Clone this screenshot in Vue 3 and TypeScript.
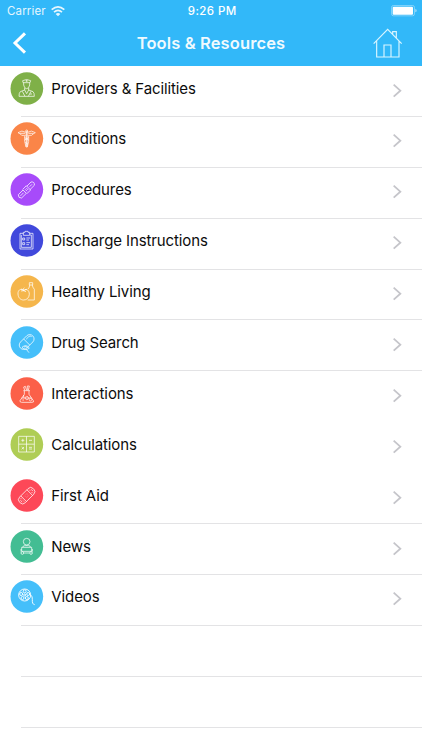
<script setup lang="ts">
interface Item {
  label: string
  color: string
  icon: string
  noLine?: boolean
}

const items: Item[] = [
  { label: 'Providers & Facilities', color: '#7fb048', icon: 'doctor' },
  { label: 'Conditions', color: '#fa8548', icon: 'caduceus' },
  { label: 'Procedures', color: '#a74bfa', icon: 'scalpel' },
  { label: 'Discharge Instructions', color: '#4149dc', icon: 'clipboard' },
  { label: 'Healthy Living', color: '#f5b64c', icon: 'food' },
  { label: 'Drug Search', color: '#45bffa', icon: 'pill' },
  { label: 'Interactions', color: '#fb6049', icon: 'flask', noLine: true },
  { label: 'Calculations', color: '#afcd55', icon: 'calculator', noLine: true },
  { label: 'First Aid', color: '#fd4858', icon: 'bandage' },
  { label: 'News', color: '#43bd93', icon: 'news' },
  { label: 'Videos', color: '#45bffa', icon: 'reel' },
]
</script>

<template>
  <div class="screen">
    <header class="top">
      <div class="status">
        <div class="carrier">
          <span>Carrier</span>
          <svg class="wifi" viewBox="0 0 42 32" width="14" height="10.7">
            <path d="M2 11Q21-6 40 11" />
            <path d="M9 18.500Q21 8 33 18.500" />
            <path class="dot" d="M14 24Q21 18 28 24L21 31Z" />
          </svg>
        </div>
        <span class="time">9:26 PM</span>
        <svg class="battery" viewBox="0 0 78 34" width="26" height="11.33">
          <rect class="shell" x="1.500" y="1.500" width="69" height="31" rx="6" />
          <rect class="charge" x="5" y="5" width="61" height="24" rx="3" />
          <path class="tip" d="M73 12Q77 13 77 17T73 22Z" />
        </svg>
      </div>
      <nav class="bar">
        <svg class="back" viewBox="0 0 40 66" width="13.3" height="22">
          <path d="M36 4L6 33L36 62" />
        </svg>
        <h1>Tools &amp; Resources</h1>
        <svg class="home" viewBox="0 0 88 90" width="29.33" height="30">
          <path d="M2 47L44 4L86 47M11 40V87H78V40M33 87V51H54V87M59 18V11H70V30" />
        </svg>
      </nav>
    </header>

    <ul class="list">
      <li v-for="item in items" :key="item.label" class="row" :class="{ plain: item.noLine }">
        <svg class="disc" viewBox="0 0 99 99" width="33" height="33">
          <circle class="fill" cx="50.500" cy="49.500" r="49" :fill="item.color" />
          <g v-if="item.icon === 'doctor'">
            <path d="M39 32L38 26Q50 19 62 26L60 32ZM41 32V39Q43 50 50 50T59 39V32M50 24V29M47 27H53" />
            <path d="M44 48V54L31 59Q27 62 27 73H73Q73 62 69 59L56 54V48M44 54L50 65L56 54M37 58L45 73M63 58L55 73M59 66H66" />
          </g>
          <g v-else-if="item.icon === 'caduceus'">
            <path d="M47 31Q36 23 24 32L31 36L35 40L47 40M53 31Q64 23 76 32L69 36L65 40L53 40M30 34H45M55 34H70" />
            <path class="thick" d="M50 28V74" />
            <path d="M44 42V58L48 75H52L56 58V42M44 47L56 54M56 47L44 54M46 61L54 67" />
            <circle cx="50" cy="27" r="3" />
          </g>
          <g v-else-if="item.icon === 'scalpel'" transform="rotate(-45 49 51)">
            <path d="M22 44H42V58H22Q14 51 22 44ZM42 42H58V60H42M58 44H76Q85 51 76 58H58M48 47V55M53 47V55M24 51H37M63 51H73" />
          </g>
          <g v-else-if="item.icon === 'clipboard'">
            <path d="M40 28H30V75H69V28H59M34 33V70H64V33H60M40 25H45V22H54V25H59V34H40Z" />
            <path d="M38 42H44V48H38ZM38 56H44V62H38ZM49 42H60M49 48H57M49 56H60M49 62H57" />
          </g>
          <g v-else-if="item.icon === 'food'">
            <path d="M41 47C31 38 23 47 24 57C25 69 32 75 41 75S57 69 58 58C58 47 51 39 41 47ZM33 42Q40 43 41 48Q43 42 51 43M40 47Q39 40 43 38M33 48L41 47L48 50" />
            <path d="M58 23H68V30H58ZM59 30Q59 37 54 42M67 30Q67 36 73 43V75H53" />
          </g>
          <g v-else-if="item.icon === 'pill'">
            <g transform="rotate(-45 50 48)">
              <rect x="24" y="35" width="52" height="26" rx="13" />
              <path d="M50 35V61M55 41H66Q71 41 72 47" />
            </g>
            <path d="M36 64Q48 53 58 66Q48 76 36 64ZM42 63Q48 59 53 65M49 70L57 80" />
          </g>
          <g v-else-if="item.icon === 'flask'">
            <path d="M40 41H60M43 41V52L30 71Q29 76 35 76H66Q73 76 70 71L57 52V41M44 40L41 30L46 28L50 40M52 40V27H58L55 40M35 63H65" />
            <path d="M41 54V62M50 58A5 5 0 1 0 51 58M61 64A4 4 0 1 0 62 64M37 69H42" />
          </g>
          <g v-else-if="item.icon === 'calculator'">
            <path d="M26 25H73V72H26ZM49.500 25V72M26 48.500H73M34 37H43M38.500 32.500V41.500M57 37H66M35 57L42 64M42 57L35 64M57 58H66M57 63H66" />
          </g>
          <g v-else-if="item.icon === 'bandage'" transform="rotate(-45 50 50)">
            <rect x="21" y="38" width="58" height="24" rx="11" />
            <path d="M37 38V62M63 38V62M27 46V54M32 43V47M32 53V57M68 43V47M68 53V57M73 46V54" />
            <path d="M44 46H45M50 46H51M56 46H57M44 54H45M50 54H51M56 54H57M47 50H48M53 50H54" />
          </g>
          <g v-else-if="item.icon === 'news'">
            <circle cx="50" cy="35" r="10" />
            <path d="M38 52Q39 47 44 47H56Q61 47 62 52M35 52H65V64H35ZM42 69H58M33 57V65M67 57V65" />
            <circle cx="37" cy="69" r="4" />
            <circle cx="63" cy="69" r="4" />
          </g>
          <g v-else class="strong">
            <circle cx="44" cy="45" r="18" />
            <circle cx="44" cy="45" r="3" />
            <circle cx="44" cy="34" r="4.500" />
            <circle cx="54.500" cy="42" r="4.500" />
            <circle cx="50.500" cy="54" r="4.500" />
            <circle cx="37.500" cy="54" r="4.500" />
            <circle cx="33.500" cy="42" r="4.500" />
            <path d="M62 45Q68 49 67 59Q66 73 74 74" />
          </g>
        </svg>
        <span class="label">{{ item.label }}</span>
        <svg class="chevron" viewBox="0 0 26 42" width="8.67" height="14">
          <path d="M2 2L22 20L2 38" />
        </svg>
      </li>
      <li v-for="n in 2" :key="n" class="row" />
    </ul>
  </div>
</template>

<style>
body {
  background: #fff;
  overflow: hidden;
}
</style>

<style scoped>
.screen {
  width: 422px;
  height: 750px;
  overflow: hidden;
  background: #fff;
  font-family: Inter, "Liberation Sans", sans-serif;
}
.top {
  height: 66px;
  background: #32b8f9;
  color: #fff;
}
svg {
  display: block;
  flex: none;
  overflow: visible;
  fill: none;
}
.status {
  display: grid;
  grid-template-columns: 1fr auto 1fr;
  align-items: center;
  height: 22px;
  padding: 0 5.500px 0 7px;
  box-sizing: border-box;
}
.carrier {
  display: flex;
  align-items: center;
  gap: 5px;
  font-size: 11.5px;
  letter-spacing: 0.15px;
  opacity: 0.88;
}
.wifi path {
  stroke: #fff;
  stroke-width: 5;
}
.wifi .dot {
  fill: #fff;
  stroke: none;
}
.time {
  margin-left: 1px;
  font-size: 11.5px;
  font-weight: 500;
  letter-spacing: 0.4px;
}
.battery {
  justify-self: end;
}
.shell {
  stroke: #a5e0fc;
  stroke-width: 2;
}
.charge {
  fill: #fff;
}
.tip {
  fill: #a5e0fc;
}
.bar {
  display: grid;
  grid-template-columns: 1fr auto 1fr;
  align-items: center;
  height: 42px;
  padding: 0 20px 0 13px;
}
.back path {
  stroke: #fff;
  stroke-width: 9;
}
h1 {
  margin: 0 0 0 7px;
  font-size: 16.5px;
  font-weight: 600;
  line-height: 20px;
  letter-spacing: 0.12px;
  opacity: 0.93;
}
.home {
  justify-self: end;
}
.home path {
  stroke: #d9f5ff;
  stroke-width: 3.5;
}
.list {
  margin: 0;
  padding: 0;
  list-style: none;
}
.row {
  display: flex;
  align-items: flex-start;
  height: 50.9px;
  padding: 5.500px 20px 0 10.300px;
  box-sizing: border-box;
  background: linear-gradient(#e3e3e5, #e3e3e5) 21px 100% / 100% 1px no-repeat;
}
.plain {
  background: none;
}
.disc {
  stroke: rgba(255, 255, 255, 0.76);
  stroke-width: 2.8;
  stroke-linejoin: round;
}
.disc .fill {
  stroke: none;
}
.disc .thick {
  stroke-width: 6;
}
.disc .strong {
  stroke: rgba(255, 255, 255, 0.9);
  stroke-width: 3;
}
.label {
  flex: 1;
  padding-left: 8px;
  font-size: 15px;
  letter-spacing: -0.11px;
  line-height: 33px;
  color: #0c0c0c;
}
.chevron {
  margin-top: 12px;
}
.chevron path {
  stroke: #c5c5ca;
  stroke-width: 5.5;
}
</style>
